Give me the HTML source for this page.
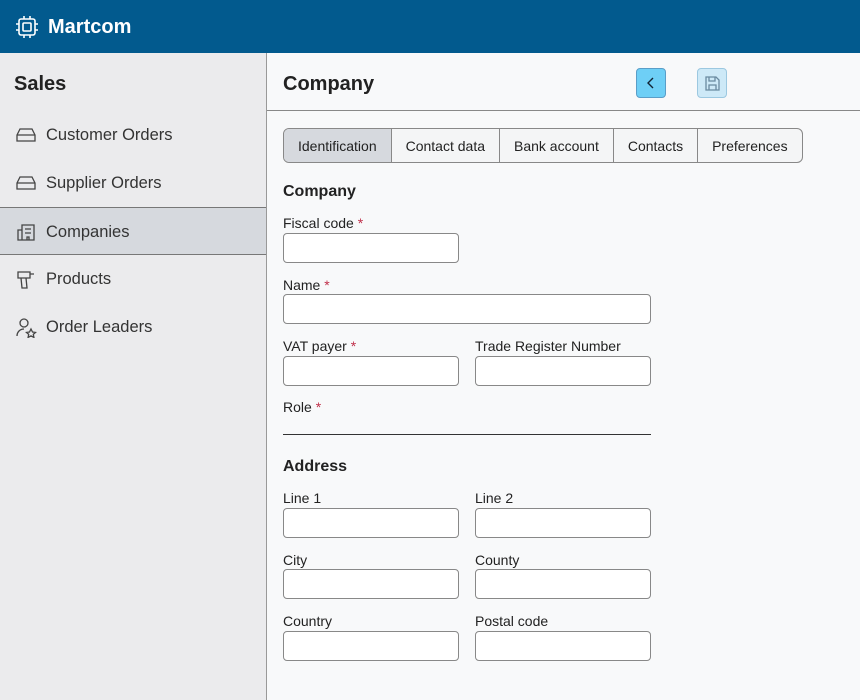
<!DOCTYPE html>
<html><head><style>
*{box-sizing:border-box;margin:0;padding:0}
body{width:860px;height:700px;overflow:hidden;font-family:"Liberation Sans",sans-serif;background:#f8f9fa;color:#222;position:relative}
.top{position:absolute;left:0;top:0;width:860px;height:53px;background:#025a8e;color:#fff}
.top .t{position:absolute;left:48px;top:16px;font-size:20px;font-weight:bold}
.side{position:absolute;left:0;top:53px;width:267px;height:647px;background:#ebebed;border-right:1px solid #999}
.side h2{position:absolute;left:14px;top:20px;font-size:20px;font-weight:bold;color:#222}
.item{position:absolute;left:0;width:266px;height:48px;font-size:16.5px;color:#333}
.item span{position:absolute;left:46px;top:15px}
.item svg{position:absolute;left:16px;top:15px}
.sel{background:#d6d9de;border-top:1px solid #777;border-bottom:1px solid #777}
.main{position:absolute;left:267px;top:53px;right:0;bottom:0}
.hdr{position:absolute;left:0;top:0;right:0;height:58px;border-bottom:1px solid #888}
.hdr h1{position:absolute;left:16px;top:20px;font-size:20px;font-weight:bold}
.btn{position:absolute;top:15px;width:30px;height:30px;border-radius:4px;border:1px solid #5a9ec8}
.tabs{position:absolute;left:16px;top:75px;height:35px;display:flex;border:1px solid #888;border-radius:6px;overflow:hidden;background:#f4f5f6}
.tabs div{font-size:14px;padding:0 14px;line-height:35px;border-left:1px solid #888;color:#222}
.tabs div:first-child{border-left:none;background:#d6d9de}
.abs{position:absolute}
.lbl{font-size:14px;color:#222}
.lbl b{color:#c0304a;font-weight:normal}
.in{height:30px;border:1px solid #888;border-radius:4px;background:#fff}
.sec{font-size:16px;font-weight:bold}
</style></head><body>
<div class="top">
<svg class="abs" style="left:15px;top:15px" width="24" height="24" viewBox="0 0 24 24" fill="none" stroke="#fff" stroke-width="1.6"><rect x="4" y="4" width="16" height="16" rx="2"/><rect x="8" y="8" width="8" height="8" rx="1"/><path d="M9 1v3M15 1v3M9 20v3M15 20v3M1 9h3M1 15h3M20 9h3M20 15h3"/></svg>
<div class="t">Martcom</div></div>
<div class="side">
<h2>Sales</h2>
<div class="item" style="top:58px"><svg width="20" height="18" viewBox="0 0 20 18" fill="none" stroke="#444" stroke-width="1.3"><path d="M1 9L4 3h12l3 6v6H1z M1 9h18"/></svg><span>Customer Orders</span></div>
<div class="item" style="top:106px"><svg width="20" height="18" viewBox="0 0 20 18" fill="none" stroke="#444" stroke-width="1.3"><path d="M1 9L4 3h12l3 6v6H1z M1 9h18"/></svg><span>Supplier Orders</span></div>
<div class="item sel" style="top:154px"><svg width="20" height="18" viewBox="0 0 20 18" fill="none" stroke="#444" stroke-width="1.3"><path d="M6 17V2h12v15zM6 7H2v10h4M9 6h6M9 10h6M11 17v-3h2v3"/></svg><span>Companies</span></div>
<div class="item" style="top:202px"><svg width="20" height="20" viewBox="0 0 20 20" fill="none" stroke="#444" stroke-width="1.3"><path d="M2 2h12v6H2zM14 4h4M5 8l1 10h5l-1-10"/></svg><span>Products</span></div>
<div class="item" style="top:250px"><svg width="22" height="20" viewBox="0 0 22 20" fill="none" stroke="#444" stroke-width="1.3"><circle cx="8" cy="5" r="4"/><path d="M1 18c0-4 3-7 7-7M15 11l1.5 3 3 .4-2.2 2 .6 3-2.9-1.5-2.9 1.5.6-3-2.2-2 3-.4z"/></svg><span>Order Leaders</span></div>
</div>
<div class="main">
<div class="hdr"><h1>Company</h1>
<div class="btn" style="left:369px;background:#6ecff6"><svg width="28" height="28" viewBox="0 0 28 28" fill="none" stroke="#123" stroke-width="1.4"><path d="M16 9l-5 5 5 5"/></svg></div>
<div class="btn" style="left:430px;background:#cde9f7;border-color:#9cc8e0"><svg width="28" height="28" viewBox="0 0 28 28" fill="none" stroke="#6a8aa0" stroke-width="1.3"><path d="M8 8h10l3 3v10H8zM11 8v4h6V8M11 21v-5h7v5"/></svg></div>
</div>
<div class="tabs"><div>Identification</div><div>Contact data</div><div>Bank account</div><div>Contacts</div><div>Preferences</div></div>
<div class="abs sec" style="left:16px;top:130px">Company</div>
<div class="abs lbl" style="left:16px;top:162px">Fiscal code <b>*</b></div>
<div class="abs in" style="left:16px;top:180px;width:176px"></div>
<div class="abs lbl" style="left:16px;top:224px">Name <b>*</b></div>
<div class="abs in" style="left:16px;top:241px;width:368px"></div>
<div class="abs lbl" style="left:16px;top:285px">VAT payer <b>*</b></div>
<div class="abs in" style="left:16px;top:303px;width:176px"></div>
<div class="abs lbl" style="left:208px;top:285px">Trade Register Number</div>
<div class="abs in" style="left:208px;top:303px;width:176px"></div>
<div class="abs lbl" style="left:16px;top:346px">Role <b>*</b></div>
<div class="abs" style="left:16px;top:381px;width:368px;height:1px;background:#333"></div>
<div class="abs sec" style="left:16px;top:405px">Address</div>
<div class="abs lbl" style="left:16px;top:437px">Line 1</div>
<div class="abs in" style="left:16px;top:455px;width:176px"></div>
<div class="abs lbl" style="left:208px;top:437px">Line 2</div>
<div class="abs in" style="left:208px;top:455px;width:176px"></div>
<div class="abs lbl" style="left:16px;top:499px">City</div>
<div class="abs in" style="left:16px;top:516px;width:176px"></div>
<div class="abs lbl" style="left:208px;top:499px">County</div>
<div class="abs in" style="left:208px;top:516px;width:176px"></div>
<div class="abs lbl" style="left:16px;top:560px">Country</div>
<div class="abs in" style="left:16px;top:578px;width:176px"></div>
<div class="abs lbl" style="left:208px;top:560px">Postal code</div>
<div class="abs in" style="left:208px;top:578px;width:176px"></div>
</div>
</body></html>
